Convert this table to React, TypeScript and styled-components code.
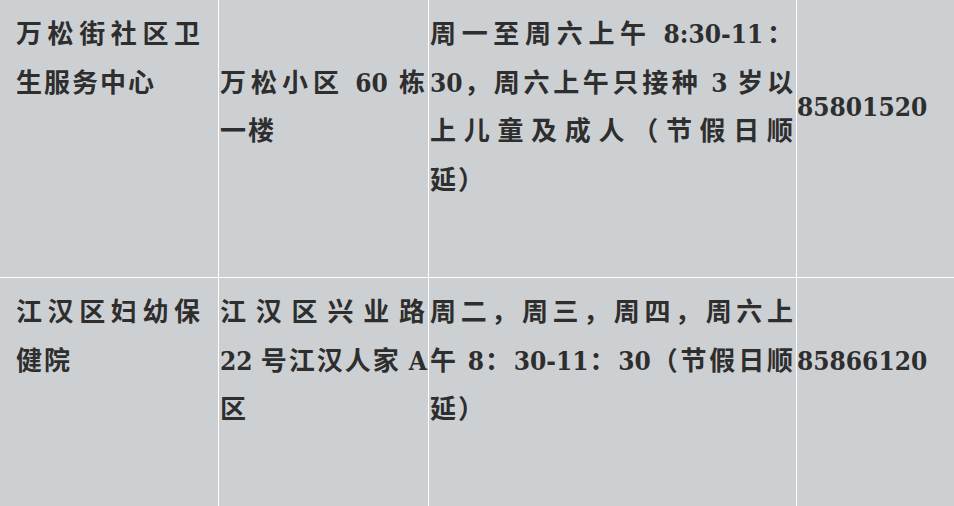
import React from "react";
import styled, { createGlobalStyle } from "styled-components";

const GlobalStyle = createGlobalStyle`
  html, body {
    margin: 0;
    padding: 0;
    background: #cdd0d3;
    overflow: hidden;
  }
`;

const Page = styled.div`
  width: 954px;
  height: 506px;
  overflow: hidden;
  background: #cdd0d3;
  color: #2e2e2e;
  font-family: "DejaVu Serif Condensed", "DejaVu Serif", "Noto Sans CJK SC", serif;
  font-size: 26px;
  font-weight: 700;
  letter-spacing: 2px;
  line-height: 48.5px;
`;

const Row = styled.div`
  display: grid;
  grid-template-columns: 219px 210px 368px 1fr;
  border-bottom: 1px solid #ffffff;
`;

const Cell = styled.div<{ $pad: number; $align: "start" | "center" }>`
  display: flex;
  flex-direction: column;
  justify-content: ${({ $align }) => ($align === "center" ? "center" : "flex-start")};
  padding: 10px ${({ $pad }) => $pad}px 73px;
  border-right: 1px solid #ffffff;
  min-width: 0;

  &:last-child {
    border-right: none;
  }
`;

const Line = styled.span<{ $last?: boolean }>`
  display: block;
  text-align: justify;
  text-align-last: ${({ $last }) => ($last ? "left" : "justify")};
`;

const Latin = styled.span`
  letter-spacing: 0;
`;

type CellData = { lines: string[]; pad: number; align: "start" | "center" };

const rows: CellData[][] = [
  [
    { lines: ["万松街社区卫", "生服务中心"], pad: 16, align: "start" },
    { lines: ["万松小区 60 栋", "一楼"], pad: 1, align: "center" },
    {
      lines: ["周一至周六上午 8:30-11：", "30，周六上午只接种 3 岁以", "上儿童及成人（节假日顺", "延）"],
      pad: 1,
      align: "center",
    },
    { lines: ["85801520"], pad: 0, align: "center" },
  ],
  [
    { lines: ["江汉区妇幼保", "健院"], pad: 16, align: "start" },
    { lines: ["江汉区兴业路", "22 号江汉人家 A", "区"], pad: 1, align: "center" },
    { lines: ["周二，周三，周四，周六上", "午 8：30-11：30（节假日顺", "延）"], pad: 1, align: "center" },
    { lines: ["85866120"], pad: 0, align: "center" },
  ],
];

function renderText(text: string) {
  return text.split(/([0-9A-Za-z:\- ]+)/).map((part, i) =>
    /[0-9A-Za-z:\- ]/.test(part) ? <Latin key={i}>{part}</Latin> : part
  );
}

export default function App() {
  return (
    <Page>
      <GlobalStyle />
      {rows.map((row, r) => (
        <Row key={r}>
          {row.map((cell, c) => (
            <Cell key={c} $pad={cell.pad} $align={cell.align}>
              {cell.lines.map((line, l) => (
                <Line key={l} $last={l === cell.lines.length - 1}>
                  {renderText(line)}
                </Line>
              ))}
            </Cell>
          ))}
        </Row>
      ))}
    </Page>
  );
}
